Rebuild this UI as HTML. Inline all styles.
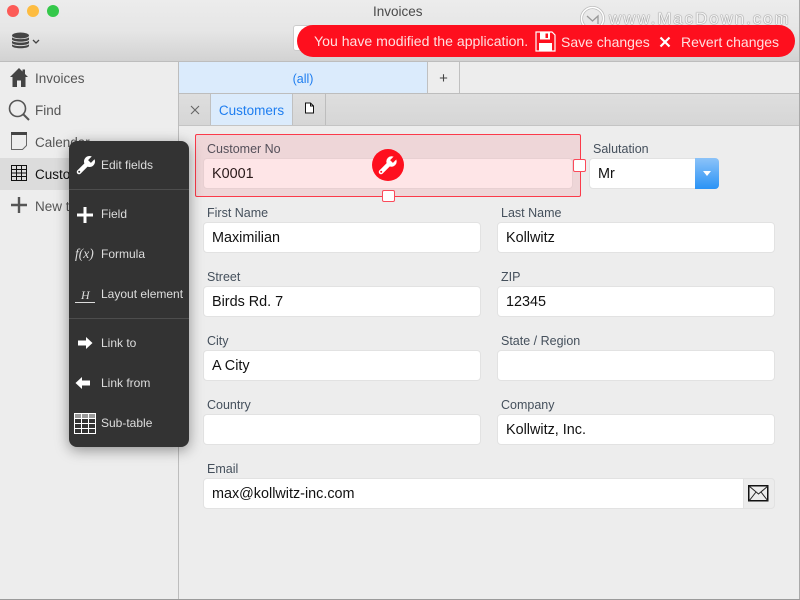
<!DOCTYPE html>
<html><head><meta charset="utf-8"><style>
*{box-sizing:border-box}
html,body{margin:0;padding:0;width:800px;height:600px;overflow:hidden;background:#ededed;font-family:"Liberation Sans",sans-serif}
.a{position:absolute}
#w{position:relative;width:800px;height:600px;overflow:hidden}
.lab{position:absolute;font-size:12.5px;color:#45505c;line-height:17px;white-space:nowrap}
.inp{position:absolute;height:31px;background:#fff;border:1px solid #e2e2e2;border-radius:4px;font-size:14.4px;color:#111;line-height:31px;padding-left:8px;white-space:nowrap}
.nav{position:absolute;left:35px;font-size:13.5px;color:#555;line-height:18px;white-space:nowrap}
.m{position:absolute;left:32px;color:#dedede;font-size:12px;line-height:16px;white-space:nowrap}
</style></head><body><div id="w">
<!-- title bar -->
<div class="a" style="left:0;top:0;width:800px;height:62px;background:linear-gradient(#ececec,#e6e6e6 50%,#d2d2d2);border-bottom:1px solid #bdbdbd"></div>
<div class="a" style="left:7px;top:5px;width:12px;height:12px;border-radius:50%;background:#fc5b57"></div>
<div class="a" style="left:27px;top:5px;width:12px;height:12px;border-radius:50%;background:#fdbc40"></div>
<div class="a" style="left:47px;top:5px;width:12px;height:12px;border-radius:50%;background:#34c84a"></div>
<div class="a" style="left:373px;top:3px;font-size:13.5px;color:#4a4a4a;line-height:18px">Invoices</div>
<svg class="a" style="left:11px;top:32px" width="30" height="18" viewBox="0 0 30 18"><g fill="#444"><ellipse cx="9.500" cy="3.500" rx="8.500" ry="3"/><path d="M1 5.200c2 2.500 15 2.500 17 0v2.300c-1 2.800-16 2.800-17 0z"/><path d="M1 8.700c2 2.500 15 2.500 17 0v2.300c-1 2.800-16 2.800-17 0z"/><path d="M1 12.200c2 2.500 15 2.500 17 0v1.800c-1 3-16 3-17 0z"/></g><path d="M22 8l3 3 3-3" fill="none" stroke="#444" stroke-width="1.300"/></svg>
<!-- watermark -->
<svg class="a" style="left:579px;top:5px" width="27" height="27" viewBox="0 0 27 27"><circle cx="13.500" cy="13.500" r="11" fill="none" stroke="#aaa" stroke-width="3" opacity=".7"/><circle cx="13.500" cy="13.500" r="11" fill="none" stroke="#fff" stroke-width="1.500"/><path d="M8 11l5.500 5 5.500-5v8" fill="none" stroke="#999" stroke-width="1.300"/></svg>
<div class="a" style="left:609px;top:9px;font-size:17px;color:#f4f4f4;letter-spacing:1.900px;line-height:20px;text-shadow:0 0 1px #777,0 0 1px #777;white-space:nowrap">www.MacDown.com</div>
<!-- small toolbar button behind banner -->
<div class="a" style="left:293px;top:25px;width:30px;height:26px;background:#fff;border:1px solid #ccc;border-radius:3px"></div>
<!-- banner -->
<div class="a" style="left:297px;top:25px;width:498px;height:32px;background:#fe0f1e;border-radius:16px"></div>
<div class="a" style="left:314px;top:32px;font-size:14.100px;color:#ffe0e0;line-height:18px;white-space:nowrap">You have modified the application.</div>
<svg class="a" style="left:535px;top:31px" width="21" height="21" viewBox="0 0 21 21"><path d="M1 1h16l3 3v16H1z" fill="#fe0f1e" stroke="#fff" stroke-width="1.200"/><rect x="5" y="1.500" width="10" height="7" fill="#fff"/><rect x="10.500" y="2.500" width="2.500" height="4.500" fill="#fe0f1e"/><rect x="4" y="12" width="13" height="8" fill="#fff"/></svg>
<div class="a" style="left:561px;top:33px;font-size:14px;color:#ffe0e0;line-height:18px;white-space:nowrap">Save changes</div>
<svg class="a" style="left:659px;top:36px" width="12" height="12" viewBox="0 0 12 12"><path d="M1.500 1.500l9 9M10.500 1.500l-9 9" stroke="#fff" stroke-width="2.200"/></svg>
<div class="a" style="left:681px;top:33px;font-size:14px;color:#ffe0e0;line-height:18px;white-space:nowrap">Revert changes</div>
<!-- sidebar -->
<div class="a" style="left:178px;top:62px;width:1px;height:538px;background:#bdbdbd"></div>
<div class="a" style="left:0;top:158px;width:178px;height:32px;background:#dcdcdc"></div>
<svg class="a" style="left:10px;top:68px" width="18" height="19" viewBox="0 0 18 19"><path d="M9 0L0 9h2.500v10H7v-6.500h4V19h4.500V9H18l-3-3V1.500h-2.500V3.500z" fill="#444"/></svg>
<div class="nav" style="top:70px">Invoices</div>
<svg class="a" style="left:8px;top:99px" width="22" height="22" viewBox="0 0 22 22"><circle cx="9.500" cy="9.500" r="8" fill="none" stroke="#555" stroke-width="1.600"/><path d="M15 15l6 6" stroke="#555" stroke-width="2"/></svg>
<div class="nav" style="top:102px">Find</div>
<svg class="a" style="left:10px;top:131px" width="18" height="20" viewBox="0 0 18 20"><path d="M1.500 1.500h15v13l-4 4h-11z" fill="none" stroke="#666" stroke-width="1"/><rect x="1" y="1" width="16" height="3" fill="#444"/></svg>
<div class="nav" style="top:134px">Calendar</div>
<svg class="a" style="left:11px;top:165px" width="17" height="17" viewBox="0 0 17 17"><path d="M.5.500h15v15H.5zM.5 4.500h15M.5 8h15M.5 11.500h15M5.500.500v15M10.500.500v15" fill="none" stroke="#111" stroke-width="1"/></svg>
<div class="nav" style="top:166px;color:#111">Customers</div>
<svg class="a" style="left:11px;top:197px" width="16" height="16" viewBox="0 0 16 16"><path d="M8 0v16M0 8h16" stroke="#555" stroke-width="2.400"/></svg>
<div class="nav" style="top:198px">New table</div>
<!-- view tabs -->
<div class="a" style="left:179px;top:62px;width:248px;height:31px;background:#dbebfc"></div>
<div class="a" style="left:179px;top:62px;width:248px;text-align:center;font-size:12.500px;color:#1f7ef0;line-height:34px">(all)</div>
<div class="a" style="left:427px;top:62px;width:1px;height:31px;background:#c0c0c0"></div>
<div class="a" style="left:459px;top:62px;width:1px;height:31px;background:#c0c0c0"></div>
<div class="a" style="left:428px;top:62px;width:31px;text-align:center;font-size:15px;color:#444;line-height:33px">+</div>
<div class="a" style="left:179px;top:93px;width:621px;height:33px;background:linear-gradient(#dedede,#d6d6d6);border-top:1px solid #bdbdbd;border-bottom:1px solid #c4c4c4"></div>
<svg class="a" style="left:190px;top:105px" width="10" height="10" viewBox="0 0 10 10"><path d="M1 1l8 8M9 1l-8 8" stroke="#666" stroke-width="1.100"/></svg>
<div class="a" style="left:210px;top:94px;width:83px;height:31px;background:#dbebfc;border-left:1px solid #c0c0c0;border-right:1px solid #c0c0c0;text-align:center;font-size:13.500px;color:#1f7ef0;line-height:33px">Customers</div>
<div class="a" style="left:325px;top:94px;width:1px;height:31px;background:#bdbdbd"></div>
<svg class="a" style="left:304px;top:102px" width="11" height="12" viewBox="0 0 11 12"><path d="M1.500 1h5l3 3v7h-8z" fill="#fff" stroke="#111" stroke-width="1"/><path d="M6.500 1v3h3" fill="none" stroke="#111"/></svg>
<!-- selected field -->
<div class="a" style="left:195px;top:134px;width:386px;height:63px;background:#eed6d8;border:1.500px solid #fb3a4a;border-radius:2px"></div>
<div class="lab" style="left:207px;top:141px;color:#55505a">Customer No</div>
<div class="inp" style="left:203px;top:158px;width:370px;background:#fee5e7;border-color:#e8d0d2;color:#2a1a1a">K0001</div>
<div class="a" style="left:372px;top:149px;width:32px;height:32px;border-radius:50%;background:#fe0f1e"></div>
<svg class="a" style="left:378px;top:155px" width="20" height="20" viewBox="0 0 20 20"><path d="M3 17L11 9" stroke="#fff" stroke-width="4.500" stroke-linecap="round"/><circle cx="13.500" cy="6.500" r="5.200" fill="#fff"/><path d="M12.100 5.100L14.900 7.900L21.900 .9L19.100 -1.900z" fill="#fe0f1e"/><circle cx="3.200" cy="16.800" r="1" fill="#fe0f1e"/></svg>
<div class="a" style="left:573px;top:159px;width:13px;height:13px;background:#fff;border:1.500px solid #fb4a5a;border-radius:2px"></div>
<div class="a" style="left:382px;top:190px;width:13px;height:12px;background:#fff;border:1.500px solid #fb4a5a;border-radius:2px"></div>
<!-- form -->
<div class="lab" style="left:593px;top:141px">Salutation</div>
<div class="inp" style="left:589px;top:158px;width:130px">Mr</div>
<div class="a" style="left:695px;top:158px;width:24px;height:31px;background:linear-gradient(#8cc3f8,#2a93f6);border-radius:0 4px 4px 0"></div>
<div class="a" style="left:703px;top:171px;width:0;height:0;border-left:4px solid transparent;border-right:4px solid transparent;border-top:5px solid #fff"></div>
<div class="lab" style="left:207px;top:205px">First Name</div>
<div class="inp" style="left:203px;top:222px;width:278px">Maximilian</div>
<div class="lab" style="left:501px;top:205px">Last Name</div>
<div class="inp" style="left:497px;top:222px;width:278px">Kollwitz</div>
<div class="lab" style="left:207px;top:269px">Street</div>
<div class="inp" style="left:203px;top:286px;width:278px">Birds Rd. 7</div>
<div class="lab" style="left:501px;top:269px">ZIP</div>
<div class="inp" style="left:497px;top:286px;width:278px">12345</div>
<div class="lab" style="left:207px;top:333px">City</div>
<div class="inp" style="left:203px;top:350px;width:278px">A City</div>
<div class="lab" style="left:501px;top:333px">State / Region</div>
<div class="inp" style="left:497px;top:350px;width:278px"></div>
<div class="lab" style="left:207px;top:397px">Country</div>
<div class="inp" style="left:203px;top:414px;width:278px"></div>
<div class="lab" style="left:501px;top:397px">Company</div>
<div class="inp" style="left:497px;top:414px;width:278px">Kollwitz, Inc.</div>
<div class="lab" style="left:207px;top:461px">Email</div>
<div class="inp" style="left:203px;top:478px;width:572px">max@kollwitz-inc.com</div>
<div class="a" style="left:743px;top:478px;width:32px;height:31px;background:#ececec;border:1px solid #e2e2e2;border-radius:0 4px 4px 0"></div>
<svg class="a" style="left:748px;top:485px" width="21" height="17" viewBox="0 0 21 17"><path d="M.75.750h19v15h-19z" fill="none" stroke="#111" stroke-width="1.500"/><path d="M1 1l9.500 8L20 1M1 16l7-9M20 16l-7-9" fill="none" stroke="#222" stroke-width="1"/></svg>
<!-- popup -->
<div class="a" style="left:69px;top:141px;width:120px;height:306px;background:#333;border-radius:8px;box-shadow:0 3px 14px rgba(0,0,0,.4)">
<svg class="a" style="left:7px;top:14px" width="20" height="20" viewBox="0 0 20 20"><path d="M3 17L11 9" stroke="#fff" stroke-width="4.500" stroke-linecap="round"/><circle cx="13.500" cy="6.500" r="5.500" fill="#fff"/><path d="M12.100 5.100L14.900 7.900L21.900 .9L19.100 -1.900z" fill="#333"/><circle cx="3.200" cy="16.800" r="1" fill="#333"/></svg>
<div class="m" style="top:16px">Edit fields</div>
<div class="a" style="left:0;top:48px;width:120px;height:1px;background:#4d4d4d"></div>
<svg class="a" style="left:8px;top:66px" width="16" height="16" viewBox="0 0 16 16"><path d="M8 0v16M0 8h16" stroke="#fff" stroke-width="3"/></svg>
<div class="m" style="top:65px">Field</div>
<div class="a" style="left:6px;top:105px;font-family:'Liberation Serif',serif;font-style:italic;font-size:13.500px;color:#ddd;line-height:16px;white-space:nowrap">f(x)</div>
<div class="m" style="top:105px">Formula</div>
<div class="a" style="left:12px;top:147px;font-family:'Liberation Serif',serif;font-style:italic;font-size:12px;color:#ddd;line-height:14px">H</div>
<div class="a" style="left:6px;top:161px;width:20px;height:1px;background:#ddd"></div>
<div class="m" style="top:145px">Layout element</div>
<div class="a" style="left:0;top:177px;width:120px;height:1px;background:#4d4d4d"></div>
<svg class="a" style="left:9px;top:196px" width="15" height="12" viewBox="0 0 15 12"><path d="M0 3.500h8V0l6.500 6L8 12V8.500H0z" fill="#fff"/></svg>
<div class="m" style="top:194px">Link to</div>
<svg class="a" style="left:6px;top:236px" width="15" height="12" viewBox="0 0 15 12"><path d="M15 3.500H7V0L.5 6 7 12V8.500h8z" fill="#fff"/></svg>
<div class="m" style="top:234px">Link from</div>
<svg class="a" style="left:5px;top:272px" width="22" height="21" viewBox="0 0 22 21"><rect x="0" y="0" width="22" height="5" fill="#999"/><path d="M.5.500h21v20H.5zM.5 5.500h21M.5 10.500h21M.5 15.500h21M7.500.500v20M14.500.500v20" fill="none" stroke="#fff" stroke-width="1"/></svg>
<div class="m" style="top:274px">Sub-table</div>
</div>
<div class="a" style="left:799px;top:0;width:1px;height:600px;background:#aaa"></div>
<div class="a" style="left:0;top:599px;width:800px;height:1px;background:#9a9a9a"></div>
</div></body></html>
